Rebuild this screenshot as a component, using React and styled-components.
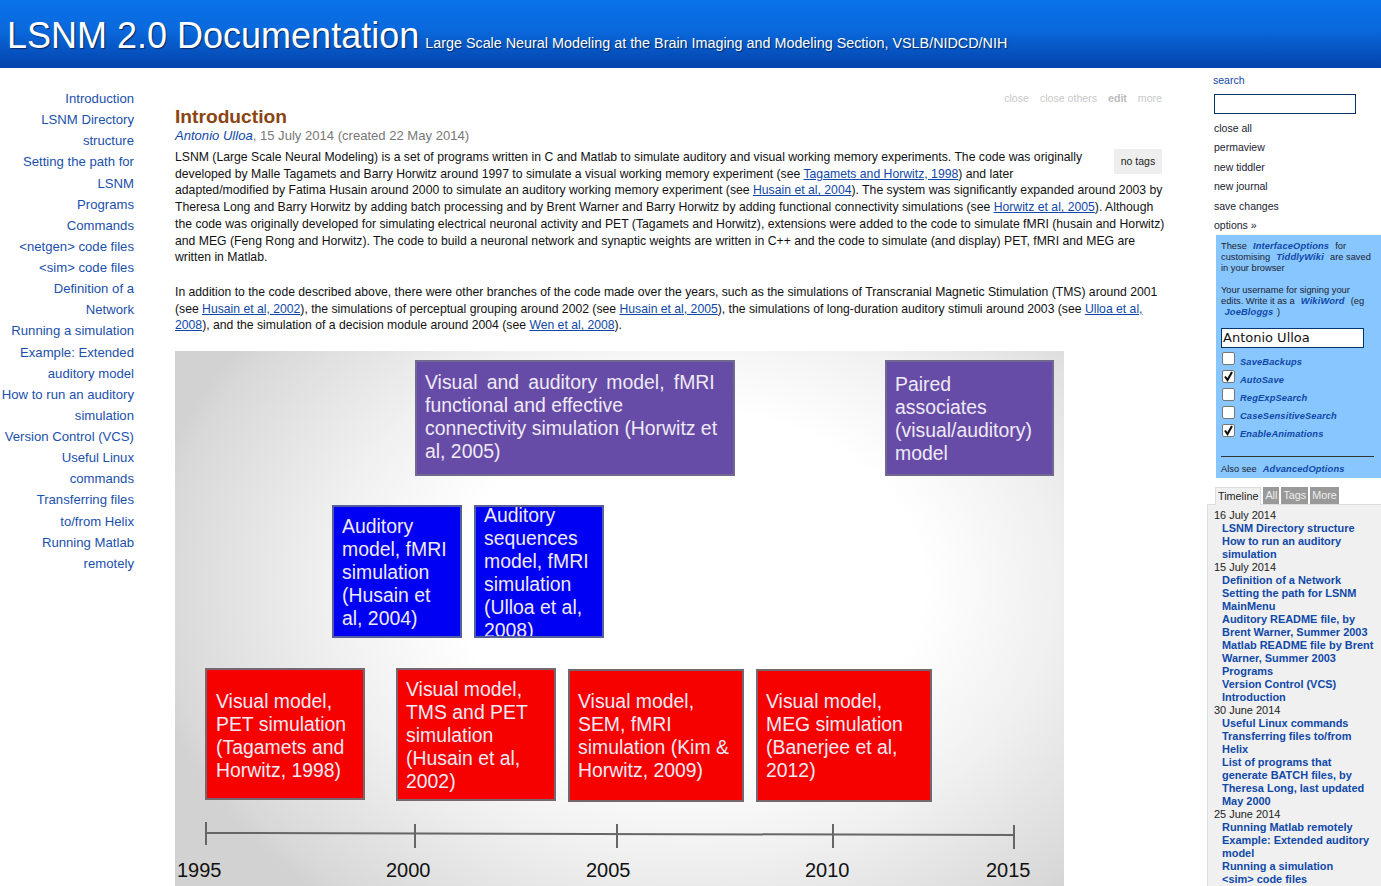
import React from 'react';
import styled, { createGlobalStyle } from 'styled-components';

const GlobalStyle = createGlobalStyle`
    html, body {
        margin: 0;
        padding: 0;
        height: 886px;
        overflow: hidden;
        background: #fff;
        font-family: "Liberation Sans", Arial, sans-serif;
    }
`;

const Header = styled.header`
    height: 68px;
    box-sizing: border-box;
    padding: 15px 0 0 7px;
    display: flex;
    align-items: baseline;
    gap: 6px;
    color: #fff;
    background: linear-gradient(180deg, #0a72ea 0%, #0a68dc 45%, #0343ab 100%);
    text-shadow: 1px 1px 1px #012a66;
    white-space: nowrap;
`;

const SiteTitle = styled.span`
    font-size: 36px;
    line-height: 42px;
`;

const SiteSubtitle = styled.span`
    font-size: 14.35px;
`;

const Layout = styled.div`
    display: grid;
    grid-template-columns: 134px 1fr 174px;
    height: 818px;
    overflow: hidden;
`;

const MainMenu = styled.nav`
    padding-top: 20px;
    text-align: right;
    font-size: 13.15px;
    line-height: 21.13px;
`;

const MenuLink = styled.a`
    display: block;
    white-space: pre-line;
    color: #1a50ac;
`;

const Content = styled.main`
    padding: 0 39px 0 41px;
    min-width: 0;
`;

const TiddlerToolbar = styled.div`
    display: flex;
    justify-content: flex-end;
    gap: 11px;
    padding: 24px 6px 0 0;
    font-size: 10.6px;
    line-height: 13px;
`;

const ToolbarCommand = styled.span`
    font-weight: ${p => (p.$strong ? 'bold' : 'normal')};
    color: ${p => (p.$strong ? '#bbb' : '#c8c8c8')};
`;

const TiddlerTitle = styled.h1`
    margin: 0;
    font-size: 19.2px;
    line-height: 23px;
    font-weight: bold;
    color: #8a4513;
`;

const TiddlerMeta = styled.div`
    font-size: 13.07px;
    line-height: 15px;
    color: #777;
    a {
        color: #0f48a8;
        font-style: italic;
    }
`;

const TagBox = styled.div`
    float: right;
    margin: 6px 6px 4px 30px;
    width: 48px;
    height: 25px;
    line-height: 25px;
    text-align: center;
    background: #eee;
    font-size: 10.5px;
    color: #222;
`;

const Body = styled.div`
    margin-top: 6px;
    font-size: 12.23px;
    line-height: 16.7px;
    color: #111;
    a {
        color: #0f48a8;
        text-decoration: underline;
    }
    p {
        margin: 0 0 18px;
    }
    p + p {
        margin-bottom: 17px;
        font-size: 12.19px;
    }
`;

const Figure = styled.div`
    position: relative;
    width: 889px;
    height: 560px;
    background: radial-gradient(ellipse 62% 74% at 58% 42%, #fff 42%, #f0f0f0 66%, #d8d8d8 96%, #d2d2d2 100%);
`;

const TONES = {
    purple: { fill: '#664ca6', edge: '#70688f' },
    blue: { fill: '#0000f2', edge: '#565f9e' },
    red: { fill: '#f70000', edge: '#75686c' },
};

const Node = styled.div`
    position: absolute;
    left: ${p => p.$x}px;
    top: ${p => p.$y}px;
    width: ${p => p.$w}px;
    height: ${p => p.$h}px;
    box-sizing: border-box;
    padding: 0 8px;
    display: flex;
    align-items: center;
    background: ${p => TONES[p.$tone].fill};
    border: 2px solid ${p => TONES[p.$tone].edge};
    color: #efeaf5;
    font-size: 19.4px;
    line-height: 23px;
    overflow: hidden;
`;

const NodeText = styled.span`
    transform: translate(${p => p.$dx || 0}px, ${p => p.$dy || 0}px);
`;

const LeadLine = styled.span`
    display: block;
    white-space: nowrap;
    word-spacing: 3.8px;
`;

const AxisLabel = styled.span`
    position: absolute;
    left: ${p => p.$x}px;
    top: 507px;
    font-size: 20px;
    line-height: 24px;
    color: #111;
`;

const AxisDrawing = styled.svg`
    position: absolute;
    left: 0;
    top: 460px;
`;

const Sidebar = styled.aside`
    display: flex;
    flex-direction: column;
    font-size: 10.5px;
    min-width: 0;
`;

const SearchBlock = styled.div`
    padding: 6px 0 0 6px;
    line-height: 13px;
    color: #0f48a8;
`;

const SearchInput = styled.div`
    box-sizing: border-box;
    margin: 7px 0 0 1px;
    width: 142px;
    height: 20px;
    border: 1px solid #04346e;
    background: #fff;
`;

const SideCommands = styled.div`
    padding: 5px 0 0 7px;
    color: #223;
    line-height: 19.4px;
`;

const Options = styled.div`
    margin: 0 0 0 9px;
    padding: 6px 7px 3px 5px;
    height: 243px;
    box-sizing: border-box;
    background: #88c6ff;
    font-size: 9.3px;
    line-height: 11px;
    color: #1b2330;
`;

const OptionLink = styled.a`
    margin: 0 3.5px;
    font-weight: bold;
    font-style: italic;
    color: #0f48a8;
    letter-spacing: 0.15px;
`;

const UserName = styled.div`
    box-sizing: border-box;
    margin-top: 10px;
    height: 20px;
    width: 143px;
    padding-left: 1px;
    border: 1px solid #04346e;
    background: #fff;
    font-family: "DejaVu Sans", sans-serif;
    font-size: 13px;
    line-height: 18px;
    color: #111;
`;

const CheckRow = styled.div`
    display: flex;
    align-items: flex-start;
    height: 18px;
    margin-top: ${p => (p.$first ? '4px' : '0')};
    a {
        margin: 5px 0 0 5px;
    }
`;

const CheckMark = styled.span`
    flex: none;
    width: 13px;
    height: 13px;
    box-sizing: border-box;
    margin-left: 1px;
    border: 1px solid #777;
    border-radius: 2px;
    background: #fff;
    display: flex;
    svg { display: block; }
`;

const Rule = styled.hr`
    margin: 14px 0 7px;
    border: none;
    border-top: 1px solid #333;
`;

const Tabs = styled.div`
    display: flex;
    gap: 2px;
    margin: 9px 0 0 8px;
    height: 17px;
    position: relative;
    z-index: 1;
`;

const Tab = styled.span`
    padding: 0 2px;
    font-size: 10.8px;
    line-height: 16px;
    background: ${p => (p.$active ? '#f0f0f0' : '#999')};
    color: ${p => (p.$active ? '#222' : '#eee')};
    border: ${p => (p.$active ? '1px solid #ddd' : 'none')};
    border-bottom: none;
    box-sizing: border-box;
    height: ${p => (p.$active ? '18px' : '17px')};
`;

const TimelinePanel = styled.div`
    flex: 1;
    padding: 4px 4px 0 6px;
    background: #f0f0f0;
    border: 1px solid #ddd;
    border-width: 1px 0 0 1px;
    font-size: 10.95px;
    line-height: 13px;
    color: #222;
`;

const TimelineLink = styled.a`
    display: block;
    padding-left: 8px;
    font-weight: bold;
    color: #0f48a8;
`;

const menu = [
    'Introduction', 'LSNM Directory structure', 'Setting the path for LSNM', 'Programs', 'Commands',
    '<netgen> code files', '<sim> code files', 'Definition of a\nNetwork', 'Running a simulation',
    'Example: Extended auditory model', 'How to run an auditory simulation', 'Version Control (VCS)',
    'Useful Linux commands', 'Transferring files to/from Helix', 'Running Matlab remotely',
];

const nodes = [
    { tone: 'purple', x: 240, y: 9, w: 320, h: 116, dy: -1, lead: 'Visual and auditory model, fMRI', text: 'functional and effective connectivity simulation (Horwitz et al, 2005)' },
    { tone: 'purple', x: 710, y: 9, w: 169, h: 116, dy: 1, text: 'Paired associates (visual/auditory) model' },
    { tone: 'blue', x: 157, y: 154, w: 130, h: 133, dy: 1, text: 'Auditory model, fMRI simulation (Husain et al, 2004)' },
    { tone: 'blue', x: 299, y: 154, w: 130, h: 133, dy: 1, text: 'Auditory sequences model, fMRI simulation (Ulloa et al, 2008)' },
    { tone: 'red', x: 30, y: 317, w: 160, h: 132, dx: 1, dy: 2, text: 'Visual model, PET simulation (Tagamets and Horwitz, 1998)' },
    { tone: 'red', x: 221, y: 317, w: 160, h: 133, dy: 1, text: 'Visual model, TMS and PET simulation (Husain et al, 2002)' },
    { tone: 'red', x: 393, y: 318, w: 176, h: 133, text: 'Visual model, SEM, fMRI simulation (Kim & Horwitz, 2009)' },
    { tone: 'red', x: 581, y: 318, w: 176, h: 133, text: 'Visual model, MEG simulation (Banerjee et al, 2012)' },
];

const years = [
    { x: 2, label: '1995' }, { x: 211, label: '2000' }, { x: 411, label: '2005' },
    { x: 630, label: '2010' }, { x: 811, label: '2015' },
];

const options = [
    { label: 'SaveBackups', on: false }, { label: 'AutoSave', on: true }, { label: 'RegExpSearch', on: false },
    { label: 'CaseSensitiveSearch', on: false }, { label: 'EnableAnimations', on: true },
];

const timeline = [
    { date: '16 July 2014', items: ['LSNM Directory structure', 'How to run an auditory simulation'] },
    { date: '15 July 2014', items: ['Definition of a Network', 'Setting the path for LSNM', 'MainMenu', 'Auditory README file, by Brent Warner, Summer 2003', 'Matlab README file by Brent Warner, Summer 2003', 'Programs', 'Version Control (VCS)', 'Introduction'] },
    { date: '30 June 2014', items: ['Useful Linux commands', 'Transferring files to/from Helix', 'List of programs that generate BATCH files, by Theresa Long, last updated May 2000'] },
    { date: '25 June 2014', items: ['Running Matlab remotely', 'Example: Extended auditory model', 'Running a simulation', '<sim> code files'] },
];

export default function App() {
    return (
        <>
            <GlobalStyle />
            <Header>
                <SiteTitle>LSNM 2.0 Documentation</SiteTitle>
                <SiteSubtitle>Large Scale Neural Modeling at the Brain Imaging and Modeling Section, VSLB/NIDCD/NIH</SiteSubtitle>
            </Header>
            <Layout>
                <MainMenu>
                    {menu.map(m => <MenuLink key={m}>{m}</MenuLink>)}
                </MainMenu>
                <Content>
                    <TiddlerToolbar>
                        <ToolbarCommand>close</ToolbarCommand>
                        <ToolbarCommand>close others</ToolbarCommand>
                        <ToolbarCommand $strong>edit</ToolbarCommand>
                        <ToolbarCommand>more</ToolbarCommand>
                    </TiddlerToolbar>
                    <TiddlerTitle>Introduction</TiddlerTitle>
                    <TiddlerMeta><a>Antonio Ulloa</a>, 15 July 2014 (created 22 May 2014)</TiddlerMeta>
                    <TagBox>no tags</TagBox>
                    <Body>
                        <p>LSNM (Large Scale Neural Modeling) is a set of programs written in C and Matlab to simulate auditory and visual working memory experiments. The code was originally developed by Malle Tagamets and Barry Horwitz around 1997 to simulate a visual working memory experiment (see <a>Tagamets and Horwitz, 1998</a>) and later adapted/modified by Fatima Husain around 2000 to simulate an auditory working memory experiment (see <a>Husain et al, 2004</a>). The system was significantly expanded around 2003 by Theresa Long and Barry Horwitz by adding batch processing and by Brent Warner and Barry Horwitz by adding functional connectivity simulations (see <a>Horwitz et al, 2005</a>). Although the code was originally developed for simulating electrical neuronal activity and PET (Tagamets and Horwitz), extensions were added to the code to simulate fMRI (husain and Horwitz) and MEG (Feng Rong and Horwitz). The code to build a neuronal network and synaptic weights are written in C++ and the code to simulate (and display) PET, fMRI and MEG are written in Matlab.</p>
                        <p>In addition to the code described above, there were other branches of the code made over the years, such as the simulations of Transcranial Magnetic Stimulation (TMS) around 2001 (see <a>Husain et al, 2002</a>), the simulations of perceptual grouping around 2002 (see <a>Husain et al, 2005</a>), the simulations of long-duration auditory stimuli around 2003 (see <a>Ulloa et al, 2008</a>), and the simulation of a decision module around 2004 (see <a>Wen et al, 2008</a>).</p>
                        <Figure>
                            {nodes.map(n => (
                                <Node key={n.text} $tone={n.tone} $x={n.x} $y={n.y} $w={n.w} $h={n.h}>
                                    <NodeText $dx={n.dx} $dy={n.dy}>
                                        {n.lead && <LeadLine>{n.lead}</LeadLine>}
                                        {n.text}
                                    </NodeText>
                                </Node>
                            ))}
                            <AxisDrawing width="889" height="50" viewBox="0 0 889 50">
                                <g stroke="#666" strokeWidth="2" fill="none">
                                    <path d="M31 22 L840 24" />
                                    <path d="M31 11 V34" />
                                    <path d="M240 13 V37" />
                                    <path d="M442 13 V37" />
                                    <path d="M658 13 V37" />
                                    <path d="M839 14 V38" />
                                </g>
                            </AxisDrawing>
                            {years.map(y => <AxisLabel key={y.label} $x={y.x}>{y.label}</AxisLabel>)}
                        </Figure>
                    </Body>
                </Content>
                <Sidebar>
                    <SearchBlock>
                        search
                        <SearchInput />
                    </SearchBlock>
                    <SideCommands>
                        <div>close all</div>
                        <div>permaview</div>
                        <div>new tiddler</div>
                        <div>new journal</div>
                        <div>save changes</div>
                        <div>options »</div>
                    </SideCommands>
                    <Options>
                        These <OptionLink>InterfaceOptions</OptionLink> for customising <OptionLink>TiddlyWiki</OptionLink> are saved in your browser
                        <br /><br />
                        Your username for signing your edits. Write it as a <OptionLink>WikiWord</OptionLink> (eg <OptionLink>JoeBloggs</OptionLink>)
                        <UserName>Antonio Ulloa</UserName>
                        {options.map((o, i) => (
                            <CheckRow key={o.label} $first={i === 0}>
                                <CheckMark>
                                    {o.on && (
                                        <svg width="11" height="11" viewBox="0 0 11 11">
                                            <path d="M2 5.5 L4.5 9 L9 1" fill="none" stroke="#111" strokeWidth="2.1" />
                                        </svg>
                                    )}
                                </CheckMark>
                                <OptionLink>{o.label}</OptionLink>
                            </CheckRow>
                        ))}
                        <Rule />
                        Also see <OptionLink>AdvancedOptions</OptionLink>
                    </Options>
                    <Tabs>
                        <Tab $active>Timeline</Tab>
                        <Tab>All</Tab>
                        <Tab>Tags</Tab>
                        <Tab>More</Tab>
                    </Tabs>
                    <TimelinePanel>
                        {timeline.map(group => (
                            <div key={group.date}>
                                {group.date}
                                {group.items.map(item => <TimelineLink key={item}>{item}</TimelineLink>)}
                            </div>
                        ))}
                    </TimelinePanel>
                </Sidebar>
            </Layout>
        </>
    );
}
